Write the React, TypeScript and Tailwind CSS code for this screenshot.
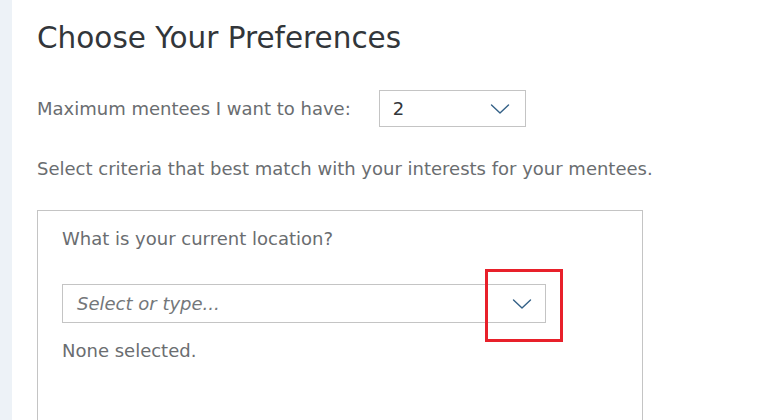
function Chevron() {
  return (
    <svg width="20" height="12" viewBox="0 0 20 12" fill="none" stroke="#346187" strokeWidth="1.4" strokeLinecap="round" strokeLinejoin="round">
      <path d="M1.5 2 L10 10 L18.5 2" />
    </svg>
  );
}

export default function App() {
  return (
    <div className="flex h-[420px] w-[768px] overflow-hidden bg-white" style={{ fontFamily: '"DejaVu Sans", "Noto Sans", sans-serif' }}>
      <div className="w-3 shrink-0 bg-[#edf2f7]" />
      <div className="flex-1 pl-[25px] pt-[19px]">
        <h1 className="text-[29.5px] leading-[38px] text-[#32363a]">Choose Your Preferences</h1>

        <div className="mt-[33px] flex items-center gap-7">
          <span className="text-[18px] leading-[24px] text-[#6a6d70]">Maximum mentees I want to have:</span>
          <div className="flex h-[37px] w-[147px] items-center justify-between border border-[#c4c4c4] pl-[13px] pr-[15px]">
            <span className="text-[18px] text-[#32363a]">2</span>
            <Chevron />
          </div>
        </div>

        <p className="mt-[30px] text-[18px] leading-[24px] text-[#6a6d70]">
          Select criteria that best match with your interests for your mentees.
        </p>

        <div className="mt-[29px] h-[240px] w-[606px] border border-[#c4c4c4] pl-[24px] pt-[16px]">
          <p className="text-[18px] leading-[24px] text-[#6a6d70]">What is your current location?</p>

          <div className="relative mt-[33px] flex h-[39px] w-[484px] items-center justify-between border border-[#c4c4c4] pl-[14px] pr-[13px]">
            <span className="text-[18px] italic text-[#74777a]">Select or type...</span>
            <Chevron />
            <div className="absolute left-[422px] top-[-16px] h-[73px] w-[78px] border-[3px] border-[#e8202a]" />
          </div>

          <p className="mt-[16px] text-[18px] leading-[24px] text-[#6a6d70]">None selected.</p>
        </div>
      </div>
    </div>
  );
}
